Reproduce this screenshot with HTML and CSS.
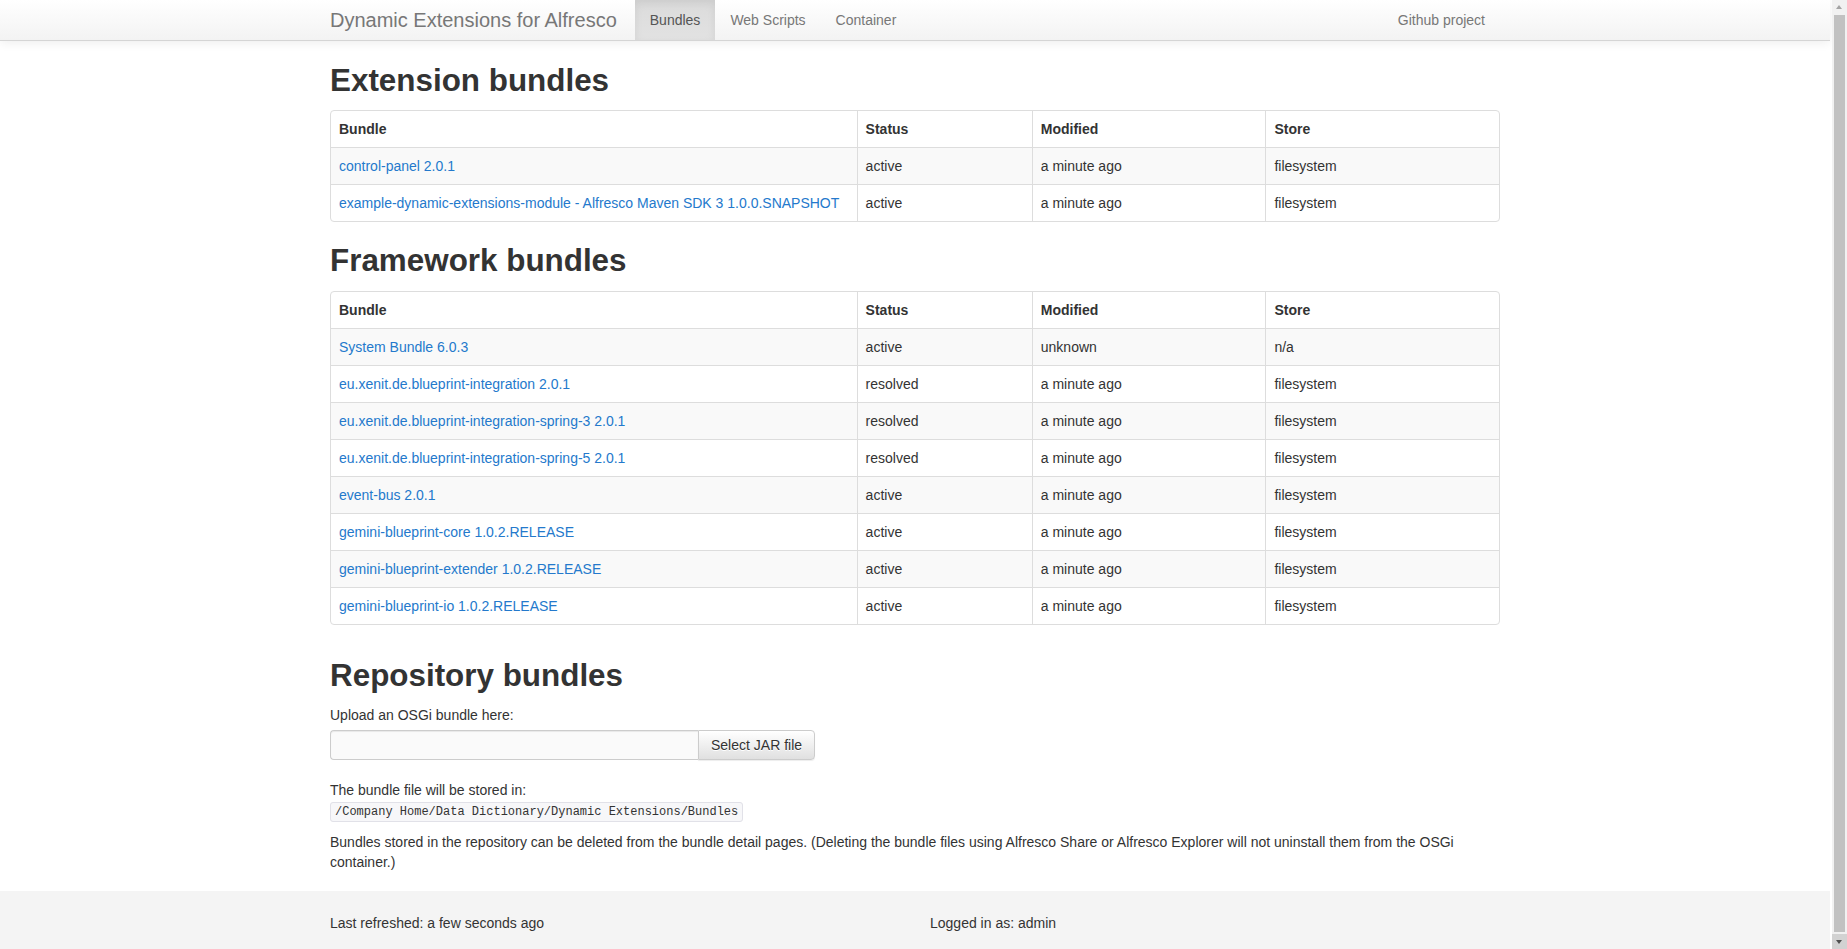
FILE: index.html
```html
<!DOCTYPE html>
<html lang="en">
<head>
<meta charset="utf-8">
<title>Dynamic Extensions for Alfresco</title>
<link rel="stylesheet" href="styles.css">
</head>
<body>
<nav class="navbar">
  <div class="container navbar-inner">
    <a class="brand" href="#">Dynamic Extensions for Alfresco</a>
    <ul class="nav">
      <li class="active"><a href="#">Bundles</a></li>
      <li><a href="#">Web Scripts</a></li>
      <li><a href="#">Container</a></li>
    </ul>
    <ul class="nav nav-right">
      <li><a href="#">Github project</a></li>
    </ul>
  </div>
</nav>

<main class="container">
  <h1 class="first">Extension bundles</h1>
  <div class="table-wrap">
    <table class="bundles">
      <colgroup><col class="c-bundle"><col class="c-status"><col class="c-mod"><col class="c-store"></colgroup>
      <thead><tr><th>Bundle</th><th>Status</th><th>Modified</th><th>Store</th></tr></thead>
      <tbody>
        <tr><td><a href="#">control-panel 2.0.1</a></td><td>active</td><td>a minute ago</td><td>filesystem</td></tr>
        <tr><td><a href="#">example-dynamic-extensions-module - Alfresco Maven SDK 3 1.0.0.SNAPSHOT</a></td><td>active</td><td>a minute ago</td><td>filesystem</td></tr>
      </tbody>
    </table>
  </div>

  <h1>Framework bundles</h1>
  <div class="table-wrap">
    <table class="bundles">
      <colgroup><col class="c-bundle"><col class="c-status"><col class="c-mod"><col class="c-store"></colgroup>
      <thead><tr><th>Bundle</th><th>Status</th><th>Modified</th><th>Store</th></tr></thead>
      <tbody>
        <tr><td><a href="#">System Bundle 6.0.3</a></td><td>active</td><td>unknown</td><td>n/a</td></tr>
        <tr><td><a href="#">eu.xenit.de.blueprint-integration 2.0.1</a></td><td>resolved</td><td>a minute ago</td><td>filesystem</td></tr>
        <tr><td><a href="#">eu.xenit.de.blueprint-integration-spring-3 2.0.1</a></td><td>resolved</td><td>a minute ago</td><td>filesystem</td></tr>
        <tr><td><a href="#">eu.xenit.de.blueprint-integration-spring-5 2.0.1</a></td><td>resolved</td><td>a minute ago</td><td>filesystem</td></tr>
        <tr><td><a href="#">event-bus 2.0.1</a></td><td>active</td><td>a minute ago</td><td>filesystem</td></tr>
        <tr><td><a href="#">gemini-blueprint-core 1.0.2.RELEASE</a></td><td>active</td><td>a minute ago</td><td>filesystem</td></tr>
        <tr><td><a href="#">gemini-blueprint-extender 1.0.2.RELEASE</a></td><td>active</td><td>a minute ago</td><td>filesystem</td></tr>
        <tr><td><a href="#">gemini-blueprint-io 1.0.2.RELEASE</a></td><td>active</td><td>a minute ago</td><td>filesystem</td></tr>
      </tbody>
    </table>
  </div>

  <h1 class="repo">Repository bundles</h1>
  <p class="upload-label">Upload an OSGi bundle here:</p>
  <div class="input-group">
    <input class="file-input" type="text" aria-label="bundle file">
    <button class="btn" type="button">Select JAR file</button>
  </div>
  <p class="store-info">The bundle file will be stored in:<br><code>/Company Home/Data Dictionary/Dynamic Extensions/Bundles</code></p>
  <p class="note">Bundles stored in the repository can be deleted from the bundle detail pages. (Deleting the bundle files using Alfresco Share or Alfresco Explorer will not uninstall them from the OSGi container.)</p>
</main>

<footer class="footer">
  <div class="container footer-row">
    <div class="footer-col">Last refreshed: a few seconds ago</div>
    <div class="footer-col">Logged in as: admin</div>
  </div>
</footer>

<div class="scrollbar" aria-hidden="true">
  <span class="sb-up"></span>
  <span class="sb-thumb"></span>
  <span class="sb-down"></span>
</div>
</body>
</html>
```

FILE: styles.css
```css
html, body {
  margin: 0;
  padding: 0;
}
body {
  font-family: "Liberation Sans", Arial, sans-serif;
  font-size: 14px;
  line-height: 20px;
  color: #333;
  background: #fff;
  padding-right: 17px;
}
a {
  color: #2479cc;
  text-decoration: none;
}
.container {
  width: 1170px;
  margin: 0 auto;
}

/* navbar */
.navbar {
  height: 40px;
  border-bottom: 1px solid #d5d5d5;
  background: linear-gradient(to bottom, #ffffff 0, #f3f3f3 100%);
  box-shadow: 0 2px 10px rgba(0, 0, 0, 0.07);
  position: relative;
  z-index: 2;
}
.navbar-inner {
  display: flex;
  align-items: stretch;
  height: 40px;
}
.brand {
  font-size: 20px;
  line-height: 40px;
  color: #777;
  margin-right: 18px;
  white-space: nowrap;
}
.nav {
  display: flex;
  list-style: none;
  margin: 0;
  padding: 0;
}
.nav a {
  display: block;
  padding: 0 15px;
  line-height: 40px;
  color: #777;
}
.nav .active a {
  color: #555;
  background: linear-gradient(to bottom, #dbdbdb 0, #e2e2e2 100%);
  box-shadow: inset 0 3px 9px rgba(0, 0, 0, 0.075);
}
.nav-right {
  margin-left: auto;
}

/* headings */
h1 {
  font-size: 31.4px;
  line-height: 34px;
  font-weight: bold;
  color: #333;
  margin: 22px 0 13px;
}
h1.first {
  margin-top: 23px;
  margin-bottom: 12px;
}
h1.repo {
  margin-top: 34px;
  margin-bottom: 12px;
}

/* tables */
.table-wrap {
  border: 1px solid #ddd;
  border-radius: 4px;
  overflow: hidden;
}
.bundles {
  width: 100%;
  border-collapse: separate;
  border-spacing: 0;
  table-layout: fixed;
}
.c-bundle { width: 45%; }
.c-status { width: 15%; }
.c-mod { width: 20%; }
.c-store { width: 20%; }
.bundles th,
.bundles td {
  padding: 8px;
  line-height: 20px;
  text-align: left;
  vertical-align: top;
  border-left: 1px solid #ddd;
  border-top: 1px solid #ddd;
  white-space: nowrap;
}
.bundles th:first-child,
.bundles td:first-child {
  border-left: 0;
}
.bundles thead th {
  border-top: 0;
  font-weight: bold;
}
.bundles tbody tr:nth-child(odd) td {
  background: #f9f9f9;
}

/* upload */
.upload-label {
  margin: 0 0 5px;
}
.input-group {
  display: flex;
  width: 485px;
}
.file-input {
  box-sizing: border-box;
  width: 368px;
  height: 30px;
  margin: 0;
  border: 1px solid #ccc;
  border-right: 0;
  border-radius: 4px 0 0 4px;
  background: #fafafa;
  box-shadow: inset 0 1px 1px rgba(0, 0, 0, 0.075);
  font: inherit;
  padding: 4px 12px;
}
.btn {
  box-sizing: border-box;
  height: 30px;
  width: 117px;
  margin: 0;
  padding: 4px 12px;
  border: 1px solid #ccc;
  border-radius: 0 4px 4px 0;
  background: linear-gradient(to bottom, #ffffff 0, #e0e0e0 100%);
  box-shadow: 0 1px 1px rgba(0, 0, 0, 0.075);
  text-shadow: 0 1px 0 #fff;
  color: #333;
  font-family: "Liberation Sans", Arial, sans-serif;
  font-size: 14px;
  line-height: 20px;
  white-space: nowrap;
}
.store-info {
  margin: 20px 0 10px;
}
code {
  font-family: "Liberation Mono", "Courier New", monospace;
  font-size: 12px;
  padding: 2px 4px;
  color: #333;
  background: #f7f7f9;
  border: 1px solid #e1e1e8;
  border-radius: 3px;
}
.note {
  margin: 0;
  padding-bottom: 19px;
}

/* footer */
.footer {
  background: #f4f4f4;
  padding: 22px 0 20px;
}
.footer-row {
  display: grid;
  grid-template-columns: 1fr 1fr;
  column-gap: 30px;
}

/* browser scrollbar (drawn over the right edge) */
.scrollbar {
  position: fixed;
  top: 0;
  right: 0;
  bottom: 0;
  width: 15px;
  background: #f1f1f1;
  z-index: 10;
}
.sb-thumb {
  position: absolute;
  top: 15px;
  bottom: 17px;
  left: 2px;
  right: 2px;
  background: #c1c1c1;
}
.sb-up,
.sb-down {
  position: absolute;
  left: 0;
  width: 15px;
  height: 15px;
}
.sb-up {
  top: 0;
}
.sb-down {
  bottom: 0;
  background: #d2d2d2;
}
.sb-up::after,
.sb-down::after {
  content: "";
  position: absolute;
  left: 4px;
  width: 0;
  height: 0;
  border-left: 3.5px solid transparent;
  border-right: 3.5px solid transparent;
}
.sb-up::after {
  top: 5px;
  border-bottom: 4px solid #a3a3a3;
}
.sb-down::after {
  top: 6px;
  border-top: 4px solid #505050;
}
```
